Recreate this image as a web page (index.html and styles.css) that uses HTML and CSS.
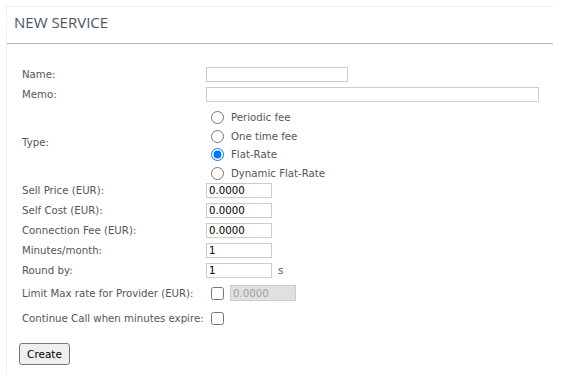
FILE: index.html
```html
<!DOCTYPE html>
<html>
<head>
    <title>New Service</title>
    <link rel="stylesheet" href="styles.css">
</head>
<body>
    <div class="panel">
        <div class="panel-head">NEW SERVICE</div>
        <form class="panel-body">
            <div class="grid">
                <label>Name:</label>
                <div><input type="text" class="w-name"></div>

                <label>Memo:</label>
                <div><input type="text" class="w-memo"></div>

                <label class="type-label">Type:</label>
                <div class="radios">
                    <label class="radio"><input type="radio" name="type"> Periodic fee</label>
                    <label class="radio"><input type="radio" name="type"> One time fee</label>
                    <label class="radio"><input type="radio" name="type" checked> Flat-Rate</label>
                    <label class="radio"><input type="radio" name="type"> Dynamic Flat-Rate</label>
                </div>

                <label>Sell Price (EUR):</label>
                <div><input type="text" class="w-num" value="0.0000"></div>

                <label>Self Cost (EUR):</label>
                <div><input type="text" class="w-num" value="0.0000"></div>

                <label>Connection Fee (EUR):</label>
                <div><input type="text" class="w-num" value="0.0000"></div>

                <label>Minutes/month:</label>
                <div><input type="text" class="w-num" value="1"></div>

                <label>Round by:</label>
                <div><input type="text" class="w-num" value="1"> <span class="unit">s</span></div>

                <label class="tall">Limit Max rate for Provider (EUR):</label>
                <div class="tall"><input type="checkbox"> <input type="text" class="w-num disabled" value="0.0000" disabled></div>

                <label class="tall">Continue Call when minutes expire:</label>
                <div class="tall"><input type="checkbox"></div>
            </div>
            <button type="button">Create</button>
        </form>
    </div>
</body>
</html>
```

FILE: styles.css
```css
body { margin: 6px 12px 12px 6px; background: #fff; font-family: "DejaVu Sans", Verdana, sans-serif; font-size: 10.2px; color: #555; }
.panel { background: #fff; border-top: 1px solid #f0f0f0; border-left: 1px solid #eee; box-shadow: 2px 2px 2px rgba(0,0,0,.45), 4px 4px 5px rgba(0,0,0,.25); height: 368px; }
.panel-head { height: 36px; line-height: 31px; padding-left: 7px; font-size: 15px; color: #4b5563; border-bottom: 1px solid #b5b5b5; font-family: "Open Sans", sans-serif; }
.panel-body { padding: 23px 13px 0 12px; }
.grid { display: grid; grid-template-columns: 184px 1fr; row-gap: 5px; padding-left: 3px; }
.grid > label, .grid > div { display: flex; align-items: center; height: 15px; white-space: nowrap; }
.grid > .tall { height: 20px; }
input[type=text] { box-sizing: border-box; height: 15px; border: 1px solid #ccc; padding: 0 2px; font-family: inherit; font-size: 10.2px; color: #000; margin: 0; }
.w-name { width: 142px; }
.w-memo { width: 333px; }
.w-num { width: 66px; }
input.disabled { height: 16px; background: #e0e0e0; color: #a0a0a0; border-color: #ccc; }
.unit { margin-left: 6px; }
.grid > .type-label { height: auto; }
.grid > .radios { display: flex; flex-direction: column; height: auto; align-items: flex-start; margin-top: 1px; margin-bottom: -4.5px; }
.radio { display: flex; align-items: center; height: 18.7px; }
.radio input { margin: 0 7px 0 5px; width: 13px; height: 13px; }
input[type=checkbox] { margin: 0 6px 0 5px; width: 13px; height: 13px; }
button { margin-top: 15px; margin-left: 0; width: 51px; height: 22px; font-family: inherit; font-size: 10.5px; color: #000; background: #efefef; border: 1px solid #767676; border-radius: 3px; padding: 0; }
```
